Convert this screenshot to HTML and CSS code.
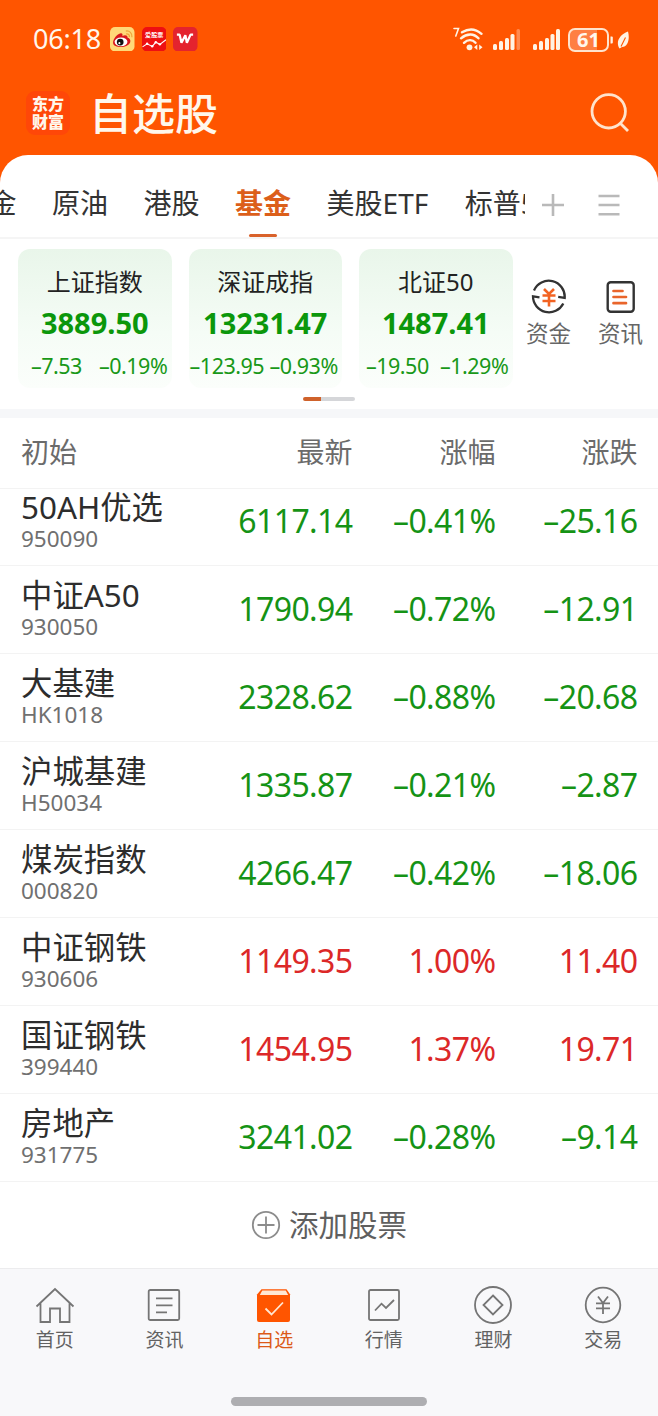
FILE: index.html
```
<!DOCTYPE html>
<html lang="zh-CN">
<head>
    <meta charset="UTF-8">
    <meta name="viewport" content="width=device-width, initial-scale=1.0">
    <title>自选股</title>
    <link rel="stylesheet" href="styles.css">
</head>
<body>
    <div class="status-bar">
        <span class="clock">06:18</span>
        <svg class="app-icon" viewBox="0 0 24 24">
            <rect width="24" height="24" rx="5" fill="#ffd978"/>
            <path d="M3 15.500c0-4 4-8.500 7.500-9.300 1.800-.2 2 1.300 1.600 2.500 2.500-1 5.400-.7 5 1.600 2.400.9 3.300 2.600 2.700 4.600-1 3-5 4.700-9 4.700S3 18.500 3 15.500z" fill="#d9181c"/>
            <ellipse cx="10.800" cy="14.500" rx="6.300" ry="4.300" fill="#fff"/>
            <circle cx="10" cy="14.800" r="3.300" fill="#111"/>
            <circle cx="9.200" cy="15.800" r="1" fill="#fff"/>
            <path d="M15.500 4c3.500-.7 6.500 2 6 6M15.800 6.800c2-.3 3.500.9 3.200 3" fill="none" stroke="#f0a43a" stroke-width="1.200"/>
        </svg>
        <svg class="app-icon" viewBox="0 0 24 24">
            <rect width="24" height="24" rx="5" fill="#ee0f12"/>
            <text class="app-text" x="12" y="9.800">爱股票</text>
            <path d="M.500 19.500l4.500-3 5 2.500 3.500-4 4 2 6-4.500" fill="none" stroke="#fff" stroke-width="1.100"/>
            <g fill="#fff"><circle cx="5" cy="16.500" r="1.200"/><circle cx="10" cy="18.800" r="1.200"/><circle cx="13.500" cy="15" r="1.200"/><circle cx="17.500" cy="17" r="1.200"/></g>
        </svg>
        <svg class="app-icon" viewBox="0 0 24 24">
            <rect width="24" height="24" rx="5" fill="#e4232e"/>
            <path d="M3.800 7.500h2.700l1.800 8 3.800-7.500 1.500 7.500 3.600-8h2.500" fill="none" stroke="#fff" stroke-width="2.200" stroke-linejoin="bevel"/>
        </svg>
        <div class="signals">
            <svg class="wifi" width="30" height="26" viewBox="0 0 30 26">
                <g fill="none" stroke="#fff3e4" stroke-width="2.400" stroke-linecap="round">
                    <path d="M1 2.500h4.500L2.800 10" stroke-width="1.600"/>
                    <path d="M9 6.300c7-4.300 14-3.300 19.500 1.500"/>
                    <path d="M8 12.300c6-5.300 13-5 17.500 0"/>
                    <path d="M11 16.800c4-3.800 8.500-3.300 11.500 0"/>
                </g>
                <circle cx="16.500" cy="21.300" r="2.900" fill="#fff3e4"/>
                <path d="M21 21.300l3.300-2.800v5.600zM29.500 21.300l-3.300-2.800v5.600z" fill="#fff3e4"/>
            </svg>
            <svg class="bars" width="28" height="22" viewBox="0 0 28 22">
                <g fill="#fff3e4"><rect x="0" y="15" width="4" height="6" rx="1.500"/><rect x="6" y="12" width="4" height="9" rx="1.500"/><rect x="12" y="9" width="4" height="12" rx="1.500"/><rect x="17.500" y="5" width="4" height="16" rx="1.500"/></g>
                <rect x="23.500" y="0" width="3.500" height="21" rx="1.500" fill="#ff8a50"/>
            </svg>
            <svg class="bars second" width="28" height="22" viewBox="0 0 28 22">
                <g fill="#fff3e4"><rect x="0" y="15" width="4" height="6" rx="1.500"/><rect x="6" y="12" width="4" height="9" rx="1.500"/><rect x="12" y="9" width="4" height="12" rx="1.500"/><rect x="17.500" y="5" width="4" height="16" rx="1.500"/><rect x="23" y="0" width="4" height="21" rx="1.500"/></g>
            </svg>
            <span class="battery">61</span>
            <svg class="leaf" width="20" height="20" viewBox="0 0 20 20">
                <path d="M1.500 6.500h1.300q1 0 1 1v5q0 1-1 1H1.500z" fill="#fff3e4"/>
                <path d="M19 1.500c2 7.500 0 15.500-6 15.500l-2.500 1.500C6.500 12.500 10 5 19 1.500z" fill="#fff3e4"/>
                <path d="M16.500 7.500l-4.500 9" stroke="#ff5500" stroke-width="1.100"/>
            </svg>
        </div>
    </div>

    <div class="header">
        <div class="logo">东方<br>财富</div>
        <h1>自选股</h1>
        <svg class="search" width="42" height="42" viewBox="0 0 42 42" fill="none" stroke="#ffe3cc" stroke-width="2.800">
            <circle cx="19.700" cy="19.300" r="16.700"/>
            <path d="M31 31l8 8"/>
        </svg>
    </div>

    <div class="panel">
        <div class="tabs">
            <div class="tab-list">
                <span class="tab">黄金</span>
                <span class="tab">原油</span>
                <span class="tab">港股</span>
                <span class="tab active">基金</span>
                <span class="tab">美股ETF</span>
                <span class="tab">标普500</span>
            </div>
            <svg class="tab-tool" width="24" height="24" viewBox="0 0 24 24" stroke="#b9b9b9" stroke-width="2.600"><path d="M1 12h22M12 1v22"/></svg>
            <svg class="tab-tool menu" width="22" height="22" viewBox="0 0 22 22" stroke="#b9b9b9" stroke-width="2.400"><path d="M.500 2h21M.500 11h21M.500 20.300h21"/></svg>
        </div>

        <div class="indexes">
            <div class="card">
                <div class="card-name">上证指数</div>
                <div class="card-value">3889.50</div>
                <div class="card-change"><span>–7.53</span><span>–0.19%</span></div>
            </div>
            <div class="card">
                <div class="card-name">深证成指</div>
                <div class="card-value">13231.47</div>
                <div class="card-change"><span>–123.95</span><span>–0.93%</span></div>
            </div>
            <div class="card">
                <div class="card-name">北证50</div>
                <div class="card-value">1487.41</div>
                <div class="card-change"><span>–19.50</span><span>–1.29%</span></div>
            </div>
            <div class="shortcut">
                <svg width="36" height="36" viewBox="0 0 36 36" fill="none" stroke="#333" stroke-width="2.300">
                    <path d="M3 11.500a16 16 0 0 1 30.700 7.300l-6.500-1M32.300 24.500A16 16 0 0 1 2 17.300l6.500 1"/>
                    <path d="M13 10l5 5 5-5M11.500 16.500h13M11.500 22h13M18 15v12.500" stroke="#f26322" stroke-width="2.600"/>
                </svg>
                <span>资金</span>
            </div>
            <div class="shortcut">
                <svg width="36" height="36" viewBox="0 0 36 36" fill="none" stroke="#333" stroke-width="2.400">
                    <rect x="4.700" y="3.200" width="26" height="29.500" rx="3"/>
                    <path d="M10.500 12h9M10.500 18h12.500M10.500 24.200h12.500" stroke="#e9652b" stroke-width="2.700" stroke-linecap="round"/>
                </svg>
                <span>资讯</span>
            </div>
        </div>
        <div class="pager"></div>
    </div>

    <div class="quote quote-head">
        <span>初始</span><span>最新</span><span>涨幅</span><span>涨跌</span>
    </div>
    <div class="quotes">
        <div class="quote down">
            <div class="stock"><b>50AH优选</b><small>950090</small></div>
            <span>6117.14</span><span>–0.41%</span><span>–25.16</span>
        </div>
        <div class="quote down">
            <div class="stock"><b>中证A50</b><small>930050</small></div>
            <span>1790.94</span><span>–0.72%</span><span>–12.91</span>
        </div>
        <div class="quote down">
            <div class="stock"><b>大基建</b><small>HK1018</small></div>
            <span>2328.62</span><span>–0.88%</span><span>–20.68</span>
        </div>
        <div class="quote down">
            <div class="stock"><b>沪城基建</b><small>H50034</small></div>
            <span>1335.87</span><span>–0.21%</span><span>–2.87</span>
        </div>
        <div class="quote down">
            <div class="stock"><b>煤炭指数</b><small>000820</small></div>
            <span>4266.47</span><span>–0.42%</span><span>–18.06</span>
        </div>
        <div class="quote up">
            <div class="stock"><b>中证钢铁</b><small>930606</small></div>
            <span>1149.35</span><span>1.00%</span><span>11.40</span>
        </div>
        <div class="quote up">
            <div class="stock"><b>国证钢铁</b><small>399440</small></div>
            <span>1454.95</span><span>1.37%</span><span>19.71</span>
        </div>
        <div class="quote down">
            <div class="stock"><b>房地产</b><small>931775</small></div>
            <span>3241.02</span><span>–0.28%</span><span>–9.14</span>
        </div>
    </div>

    <div class="add-stock">
        <svg width="30" height="30" viewBox="0 0 30 30" fill="none" stroke="#8c8c8c" stroke-width="1.800">
            <circle cx="15" cy="15" r="13.200"/><path d="M6.500 15h17M15 6.500v17"/>
        </svg>
        <span>添加股票</span>
    </div>

    <div class="nav">
        <div class="nav-item">
            <svg viewBox="0 0 40 40"><path d="M1.500 21.500L20 4l18.500 17.500M5.500 18.500V37H15V23.500h10V37h9.500V18.500"/></svg>
            <span>首页</span>
        </div>
        <div class="nav-item">
            <svg viewBox="0 0 40 40"><rect x="4.700" y="5" width="30.500" height="30" rx="1.500"/><path d="M12 13.300h16.500M12 20.300h16.500M12 27.300h11"/></svg>
            <span>资讯</span>
        </div>
        <div class="nav-item active">
            <svg viewBox="0 0 40 40">
                <path d="M7.500 4.300h25l3.500 5V35a2 2 0 0 1-2 2H5a2 2 0 0 1-2-2V9.500z" fill="#ff5500" stroke="none"/>
                <path d="M8.300 5.500h23.400l2.500 4.500H5.800z" fill="#ffe7d3" stroke="none"/>
                <path d="M11.500 23.500l6 6L29 17.500" stroke="#ffe7d3"/>
            </svg>
            <span>自选</span>
        </div>
        <div class="nav-item">
            <svg viewBox="0 0 40 40"><rect x="5" y="5" width="30" height="30" rx="1.500"/><path d="M11 25.500l6.500-6.800 4.500 4.300 8-8"/></svg>
            <span>行情</span>
        </div>
        <div class="nav-item">
            <svg viewBox="0 0 40 40"><circle cx="20" cy="20" r="18"/><path d="M20 10.500l9.500 9.500-9.500 9.500-9.500-9.500z"/></svg>
            <span>理财</span>
        </div>
        <div class="nav-item">
            <svg viewBox="0 0 40 40"><circle cx="20" cy="20" r="17.300"/><path d="M15 11.500l5 6.500 5-6.500M13 18.300h14M13 23.300h14M20 18v11"/></svg>
            <span>交易</span>
        </div>
    </div>
    <div class="home-bar"></div>
</body>
</html>
```
FILE: styles.css
```
* {
    box-sizing: border-box;
}
body {
    margin: 0;
    width: 658px;
    height: 1416px;
    overflow: hidden;
    display: flex;
    flex-direction: column;
    background: #ff5500;
    font-family: "Noto Sans", "Noto Sans CJK SC", sans-serif;
    color: #333;
}
svg {
    display: block;
    flex: none;
}
.status-bar {
    display: flex;
    align-items: center;
    gap: 7px;
    height: 78px;
    padding: 0 29px 0 33px;
}
.clock {
    width: 70px;
    margin-top: -2px;
    font-size: 27px;
    color: #fff7ec;
    letter-spacing: -0.2px;
}
.app-icon {
    width: 24.5px;
    height: 24.5px;
}
.app-text {
    font-size: 6px;
    font-weight: 700;
    fill: #fff;
    text-anchor: middle;
}
.signals {
    display: flex;
    align-items: center;
    margin-left: auto;
}
.bars {
    margin: 1px 0 0 10px;
}
.bars.second {
    margin-left: 12px;
}
.battery {
    width: 41px;
    height: 24px;
    margin: 2px 0 0 7px;
    border: 2px solid #ffe3cc;
    border-radius: 7px;
    background: linear-gradient(90deg, #ff7f42 72%, #ff5500 72%);
    color: #fff7ec;
    font-size: 20px;
    font-weight: 700;
    line-height: 20px;
    text-align: center;
}
.leaf {
    margin-top: 2px;
}
.header {
    display: flex;
    align-items: center;
    height: 77px;
    padding: 0 27px 8px 26px;
}
.logo {
    width: 44px;
    height: 44px;
    margin-top: 1px;
    padding-top: 4px;
    border-radius: 9px;
    background: #ff4708;
    color: #fff7ec;
    font-size: 16px;
    font-weight: 900;
    line-height: 18px;
    text-align: center;
}
h1 {
    margin: 2px 0 0 19px;
    font-size: 43px;
    font-weight: 500;
    line-height: 60px;
    color: #fff7ec;
}
.search {
    margin: 0 0 0 auto;
}
.panel {
    height: 263px;
    border-radius: 28px 28px 0 0;
    border-bottom: 9px solid #f6f7f9;
    background: #fff;
    overflow: hidden;
}
.tabs {
    display: flex;
    align-items: center;
    height: 84px;
    border-bottom: 2px solid #f5f5f5;
}
.tab-list {
    display: flex;
    gap: 35.5px;
    width: 525px;
    height: 84px;
    padding-top: 15px;
    overflow: hidden;
    flex: none;
}
.tab {
    flex: none;
    font-size: 28px;
    line-height: 68px;
    white-space: nowrap;
}
.tab:first-child {
    margin-left: -39.5px;
}
.tab:last-child {
    margin-left: 1px;
}
.tab.active {
    display: flex;
    flex-direction: column;
    align-items: center;
    color: #dc5f1a;
    font-weight: 700;
}
.tab.active::after {
    content: "";
    width: 28px;
    height: 3px;
    margin-top: -3px;
    border-radius: 2px;
    background: #d9622b;
}
.tab-tool {
    margin: 18px 0 0 16px;
}
.tab-tool.menu {
    margin-left: 33px;
}
.indexes {
    display: flex;
    padding: 10px 0 0 18px;
}
.card {
    width: 153.5px;
    height: 139px;
    margin-right: 17px;
    padding-top: 15px;
    border-radius: 12px;
    background: linear-gradient(#e9f6ea, #f5fcf6 60%, #fbfefb);
    text-align: center;
    white-space: nowrap;
}
.card-name {
    font-size: 24px;
    line-height: 36px;
    color: #222;
}
.card-value {
    font-size: 29px;
    font-weight: 700;
    line-height: 46px;
    color: #0b970b;
}
.card-change {
    display: grid;
    grid-template-columns: 1fr 1fr;
    justify-items: center;
    font-size: 21.5px;
    line-height: 39px;
    letter-spacing: -0.5px;
    color: #189818;
}
.card-change span {
    width: 76px;
    display: flex;
    justify-content: center;
}
.shortcut {
    display: flex;
    flex-direction: column;
    align-items: center;
    width: 72px;
    padding-top: 30px;
    font-size: 22.5px;
    line-height: 38px;
    color: #666;
}
.card + .shortcut {
    margin-left: -17px;
}
.pager {
    width: 52px;
    height: 4px;
    margin: 9px auto 0;
    border-radius: 2px;
    background: linear-gradient(90deg, #cf622b 34%, #d5d6d9 34%);
}
.quote {
    display: grid;
    grid-template-columns: 180px 151.5px 143px 142px;
    height: 88px;
    padding-left: 21px;
    border-bottom: 1px solid #f3f3f3;
    background: #fff;
    font-size: 32px;
    line-height: 85px;
    letter-spacing: -0.6px;
}
.quote > span {
    text-align: right;
}
.quote-head {
    height: 71px;
    font-size: 28px;
    line-height: 68px;
    letter-spacing: 0;
    color: #6b6b6b;
}
.quote-head > span:first-child {
    text-align: left;
}
.quotes {
    height: 693px;
    overflow: hidden;
}
.quotes .quote:first-child {
    margin-top: -11px;
}
.stock {
    padding-top: 9px;
    letter-spacing: 0;
}
.stock b,
.stock small {
    display: block;
    font-weight: 400;
}
.stock b {
    font-size: 31.4px;
    line-height: 39px;
    color: #2d2d2d;
}
.stock small {
    font-size: 22.5px;
    line-height: 25px;
    color: #707070;
}
.down {
    color: #159315;
}
.up {
    color: #dc2828;
}
.add-stock {
    display: flex;
    align-items: center;
    justify-content: center;
    gap: 8px;
    height: 86px;
    background: #fff;
    font-size: 29.5px;
    color: #5f5f5f;
}
.add-stock span {
    margin-top: -4px;
}
.nav {
    display: grid;
    grid-template-columns: repeat(6, 1fr);
    height: 129px;
    padding-top: 16px;
    border-top: 1px solid #ececee;
    background: #f8f8fa;
}
.nav-item {
    display: flex;
    flex-direction: column;
    align-items: center;
    font-size: 19px;
    line-height: 31px;
    color: #626262;
}
.nav-item svg {
    width: 40px;
    height: 40px;
    fill: none;
    stroke: #757575;
    stroke-width: 1.8;
}
.nav-item.active {
    color: #dc5a18;
}
.home-bar {
    flex: 1;
    background: #f8f8fa;
}
.home-bar::before {
    content: "";
    display: block;
    width: 196px;
    height: 9px;
    margin: 0 auto;
    border-radius: 5px;
    background: #aeaeb1;
}
```
